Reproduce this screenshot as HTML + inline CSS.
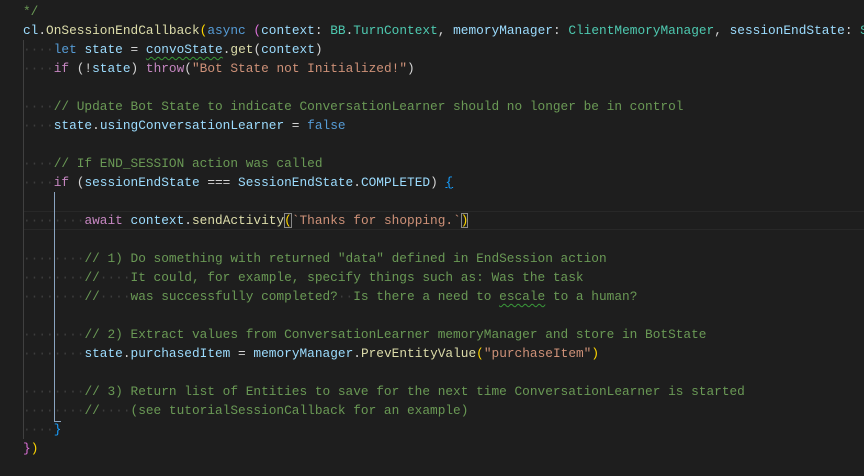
<!DOCTYPE html>
<html><head><meta charset="utf-8"><style>
html,body{margin:0;padding:0;background:#1e1e1e;width:864px;height:476px;overflow:hidden}
pre{margin:0;position:absolute;left:23px;top:2px;font-family:"Liberation Mono",monospace;font-size:12.8px;line-height:19px;color:#d4d4d4;white-space:pre}
.d{color:#3d3d3d}.c{color:#6a9955}.k{color:#569cd6}.p{color:#c586c0}.v{color:#9cdcfe}.f{color:#dcdcaa}.s{color:#ce9178}.t{color:#4ec9b0}
.y{color:#ffd700}.m{color:#da70d6}.b{color:#179fff}
.sq{text-decoration:underline wavy #3a9a3a;text-decoration-thickness:1px;text-underline-offset:3px}
.bm{outline:1px solid #888;outline-offset:-1px}
.u{text-decoration:underline}
</style></head><body>
<div style="position:absolute;left:23px;top:211px;width:841px;height:17px;border-top:1px solid #282828;border-bottom:1px solid #282828"></div>
<div style="position:absolute;left:23px;top:40px;width:1px;height:399px;background:#404040"></div>
<div style="position:absolute;left:54px;top:192px;width:6px;height:229px;border-left:1px solid #8aa4c0;border-bottom:1px solid #8aa4c0"></div>
<pre><span class="c">*/</span>
<span class="v">cl</span>.<span class="f">OnSessionEndCallback</span><span class="y">(</span><span class="k">async</span> <span class="m">(</span><span class="v">context</span>: <span class="t">BB</span>.<span class="t">TurnContext</span>, <span class="v">memoryManager</span>: <span class="t">ClientMemoryManager</span>, <span class="v">sessionEndState</span>: <span class="t">S</span>
<span class="d">····</span><span class="k">let</span> <span class="v">state</span> = <span class="v sq">convoState</span>.<span class="f">get</span>(<span class="v">context</span>)
<span class="d">····</span><span class="p">if</span> (!<span class="v">state</span>) <span class="p">throw</span>(<span class="s">"Bot State not Initialized!"</span>)

<span class="d">····</span><span class="c">// Update Bot State to indicate ConversationLearner should no longer be in control</span>
<span class="d">····</span><span class="v">state</span>.<span class="v">usingConversationLearner</span> = <span class="k">false</span>

<span class="d">····</span><span class="c">// If END_SESSION action was called</span>
<span class="d">····</span><span class="p">if</span> (<span class="v">sessionEndState</span> === <span class="v">SessionEndState</span>.<span class="v">COMPLETED</span>) <span class="b u">{</span>

<span class="d">········</span><span class="p">await</span> <span class="v">context</span>.<span class="f">sendActivity</span><span class="y bm">(</span><span class="s">`Thanks for shopping.`</span><span class="y bm">)</span>

<span class="d">········</span><span class="c">// 1) Do something with returned "data" defined in EndSession action</span>
<span class="d">········</span><span class="c">//<span class="d">····</span>It could, for example, specify things such as: Was the task</span>
<span class="d">········</span><span class="c">//<span class="d">····</span>was successfully completed?<span class="d">··</span>Is there a need to <span class="sq">escale</span> to a human?</span>

<span class="d">········</span><span class="c">// 2) Extract values from ConversationLearner memoryManager and store in BotState</span>
<span class="d">········</span><span class="v">state</span>.<span class="v">purchasedItem</span> = <span class="v">memoryManager</span>.<span class="f">PrevEntityValue</span><span class="y">(</span><span class="s">"purchaseItem"</span><span class="y">)</span>

<span class="d">········</span><span class="c">// 3) Return list of Entities to save for the next time ConversationLearner is started</span>
<span class="d">········</span><span class="c">//<span class="d">····</span>(see tutorialSessionCallback for an example)</span>
<span class="d">····</span><span class="b">}</span>
<span class="m">}</span><span class="y">)</span>
</pre>
</body></html>
